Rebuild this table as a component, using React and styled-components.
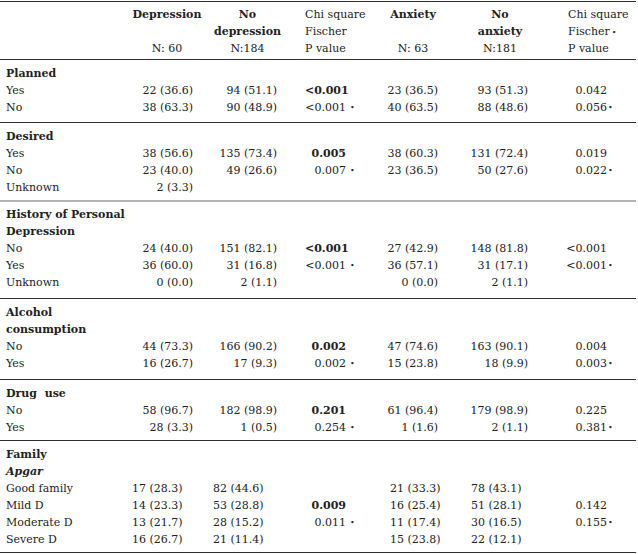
import React from "react";
import styled, { createGlobalStyle } from "styled-components";

const GlobalStyle = createGlobalStyle`
  html, body {
    margin: 0;
    padding: 0;
    background: #ffffff;
  }
  body {
    font-family: "DejaVu Serif", "Liberation Serif", serif;
    font-size: 11px;
    color: #222222;
  }
`;

const COLUMNS = "132px 70px 91px 87px 66px 108px 82px";

// per data column: right padding when right-aligned, left padding when left-aligned
const COUNT_COLS = [
  { pr: 9, pl: 0 },
  { pr: 16, pl: 11 },
  null,
  { pr: 8, pl: 10 },
  { pr: 26, pl: 25 },
  null,
];
const P_COLS = { 2: { pl: 12, box: 41 }, 5: { pl: 11, box: 42 } };

const Page = styled.div`
  width: 636px;
  padding-top: 1px;
`;

const Section = styled.div`
  display: grid;
  grid-template-columns: ${COLUMNS};
  grid-auto-rows: 17px;
  line-height: 17px;
  padding: ${(p) => p.$pt}px 0 ${(p) => p.$pb}px;
  border-top: ${(p) => (p.$top ? "1px solid #2e2e2e" : "none")};
  border-bottom: ${(p) => (p.$light ? "2px solid #b4b4b4" : "1px solid #2e2e2e")};
`;

const HeadCell = styled.div`
  grid-row: span 3;
  display: flex;
  flex-direction: column;
  align-items: ${(p) => (p.$left ? "flex-start" : "center")};
  padding-left: ${(p) => p.$pl || 0}px;
  font-weight: ${(p) => (p.$bold ? 700 : 400)};
  white-space: nowrap;
`;

const HeadLine = styled.div`
  height: 17px;
`;

const NLine = styled.div`
  height: 17px;
  font-weight: 400;
`;

const Label = styled.div`
  grid-column: 1;
  padding-left: 6px;
  white-space: pre;
  font-weight: ${(p) => (p.$title ? 700 : 400)};
  font-style: ${(p) => (p.$italic ? "italic" : "normal")};
`;

const Filler = styled.div`
  grid-column: 2 / -1;
`;

const Count = styled.div`
  text-align: ${(p) => p.$align};
  padding-right: ${(p) => (p.$align === "right" ? p.$pr : 0)}px;
  padding-left: ${(p) => (p.$align === "left" ? p.$pl : 0)}px;
  white-space: nowrap;
`;

const PCell = styled.div`
  display: flex;
  padding-left: ${(p) => p.$pl}px;
  white-space: nowrap;
`;

const PValue = styled.span`
  display: inline-block;
  width: ${(p) => p.$box}px;
  text-align: right;
  font-weight: ${(p) => (p.$bold ? 700 : 400)};
`;

const Mark = styled.span`
  font-size: 8px;
  margin-left: ${(p) => p.$gap}px;
`;

const SECTIONS = [
  {
    pt: 5,
    pb: 6,
    titles: ["Planned"],
    rows: [
      ["Yes", "22 (36.6)", "94 (51.1)", { v: "<0.001", b: true }, "23 (36.5)", "93 (51.3)", { v: "0.042" }],
      ["No", "38 (63.3)", "90 (48.9)", { v: "<0.001", m: true }, "40 (63.5)", "88 (48.6)", { v: "0.056", m: true }],
    ],
  },
  {
    pt: 5,
    pb: 4,
    light: true,
    titles: ["Desired"],
    rows: [
      ["Yes", "38 (56.6)", "135 (73.4)", { v: "0.005", b: true }, "38 (60.3)", "131 (72.4)", { v: "0.019" }],
      ["No", "23 (40.0)", "49 (26.6)", { v: "0.007", m: true }, "23 (36.5)", "50 (27.6)", { v: "0.022", m: true }],
      ["Unknown", "2 (3.3)"],
    ],
  },
  {
    pt: 4,
    pb: 7,
    titles: ["History of Personal", "Depression"],
    rows: [
      ["No", "24 (40.0)", "151 (82.1)", { v: "<0.001", b: true }, "27 (42.9)", "148 (81.8)", { v: "<0.001" }],
      ["Yes", "36 (60.0)", "31 (16.8)", { v: "<0.001", m: true }, "36 (57.1)", "31 (17.1)", { v: "<0.001", m: true }],
      ["Unknown", "0 (0.0)", "2 (1.1)", null, "0 (0.0)", "2 (1.1)"],
    ],
  },
  {
    pt: 5,
    pb: 7,
    titles: ["Alcohol", "consumption"],
    rows: [
      ["No", "44 (73.3)", "166 (90.2)", { v: "0.002", b: true }, "47 (74.6)", "163 (90.1)", { v: "0.004" }],
      ["Yes", "16 (26.7)", "17 (9.3)", { v: "0.002", m: true }, "15 (23.8)", "18 (9.9)", { v: "0.003", m: true }],
    ],
  },
  {
    pt: 5,
    pb: 4,
    titles: ["Drug  use"],
    rows: [
      ["No", "58 (96.7)", "182 (98.9)", { v: "0.201", b: true }, "61 (96.4)", "179 (98.9)", { v: "0.225" }],
      ["Yes", "28 (3.3)", "1 (0.5)", { v: "0.254", m: true }, "1 (1.6)", "2 (1.1)", { v: "0.381", m: true }],
    ],
  },
  {
    pt: 5,
    pb: 4,
    left: true,
    titles: ["Family"],
    sub: "Apgar",
    rows: [
      ["Good family", "17 (28.3)", "82 (44.6)", null, "21 (33.3)", "78 (43.1)"],
      ["Mild D", "14 (23.3)", "53 (28.8)", { v: "0.009", b: true }, "16 (25.4)", "51 (28.1)", { v: "0.142" }],
      ["Moderate D", "13 (21.7)", "28 (15.2)", { v: "0.011", m: true }, "11 (17.4)", "30 (16.5)", { v: "0.155", m: true }],
      ["Severe D", "16 (26.7)", "21 (11.4)", null, "15 (23.8)", "22 (12.1)"],
    ],
  },
];

const Header = () => (
  <Section $top $pt={4} $pb={2}>
    <HeadCell />
    <HeadCell $bold>
      <HeadLine>Depression</HeadLine>
      <HeadLine />
      <NLine>N: 60</NLine>
    </HeadCell>
    <HeadCell $bold>
      <HeadLine>No</HeadLine>
      <HeadLine>depression</HeadLine>
      <NLine>N:184</NLine>
    </HeadCell>
    <HeadCell $left $pl={12}>
      <HeadLine>Chi square</HeadLine>
      <HeadLine>Fischer</HeadLine>
      <HeadLine>P value</HeadLine>
    </HeadCell>
    <HeadCell $bold>
      <HeadLine>Anxiety</HeadLine>
      <HeadLine />
      <NLine>N: 63</NLine>
    </HeadCell>
    <HeadCell $bold>
      <HeadLine>No</HeadLine>
      <HeadLine>anxiety</HeadLine>
      <NLine>N:181</NLine>
    </HeadCell>
    <HeadCell $left $pl={14}>
      <HeadLine>Chi square</HeadLine>
      <HeadLine>
        Fischer<Mark $gap={2}>•</Mark>
      </HeadLine>
      <HeadLine>P value</HeadLine>
    </HeadCell>
  </Section>
);

const DataRow = ({ row, left }) => {
  const [label, ...cells] = row;
  return (
    <>
      <Label>{label}</Label>
      {COUNT_COLS.map((col, i) => {
        const cell = cells[i];
        if (col) {
          return (
            <Count key={i} $align={left ? "left" : "right"} $pr={col.pr} $pl={col.pl}>
              {cell || ""}
            </Count>
          );
        }
        const p = P_COLS[i];
        if (!cell) return <PCell key={i} $pl={p.pl} />;
        return (
          <PCell key={i} $pl={p.pl}>
            <PValue $box={p.box} $bold={cell.b}>
              {cell.v}
            </PValue>
            {cell.m && <Mark $gap={i === 2 ? 4 : 1}>•</Mark>}
          </PCell>
        );
      })}
    </>
  );
};

const App = () => (
  <Page>
    <GlobalStyle />
    <Header />
    {SECTIONS.map((s, si) => (
      <Section key={si} $pt={s.pt} $pb={s.pb} $light={s.light}>
        {s.titles.map((t) => (
          <React.Fragment key={t}>
            <Label $title>{t}</Label>
            <Filler />
          </React.Fragment>
        ))}
        {s.sub && (
          <>
            <Label $title $italic>
              {s.sub}
            </Label>
            <Filler />
          </>
        )}
        {s.rows.map((r, ri) => (
          <DataRow key={ri} row={r} left={s.left} />
        ))}
      </Section>
    ))}
  </Page>
);

export default App;
